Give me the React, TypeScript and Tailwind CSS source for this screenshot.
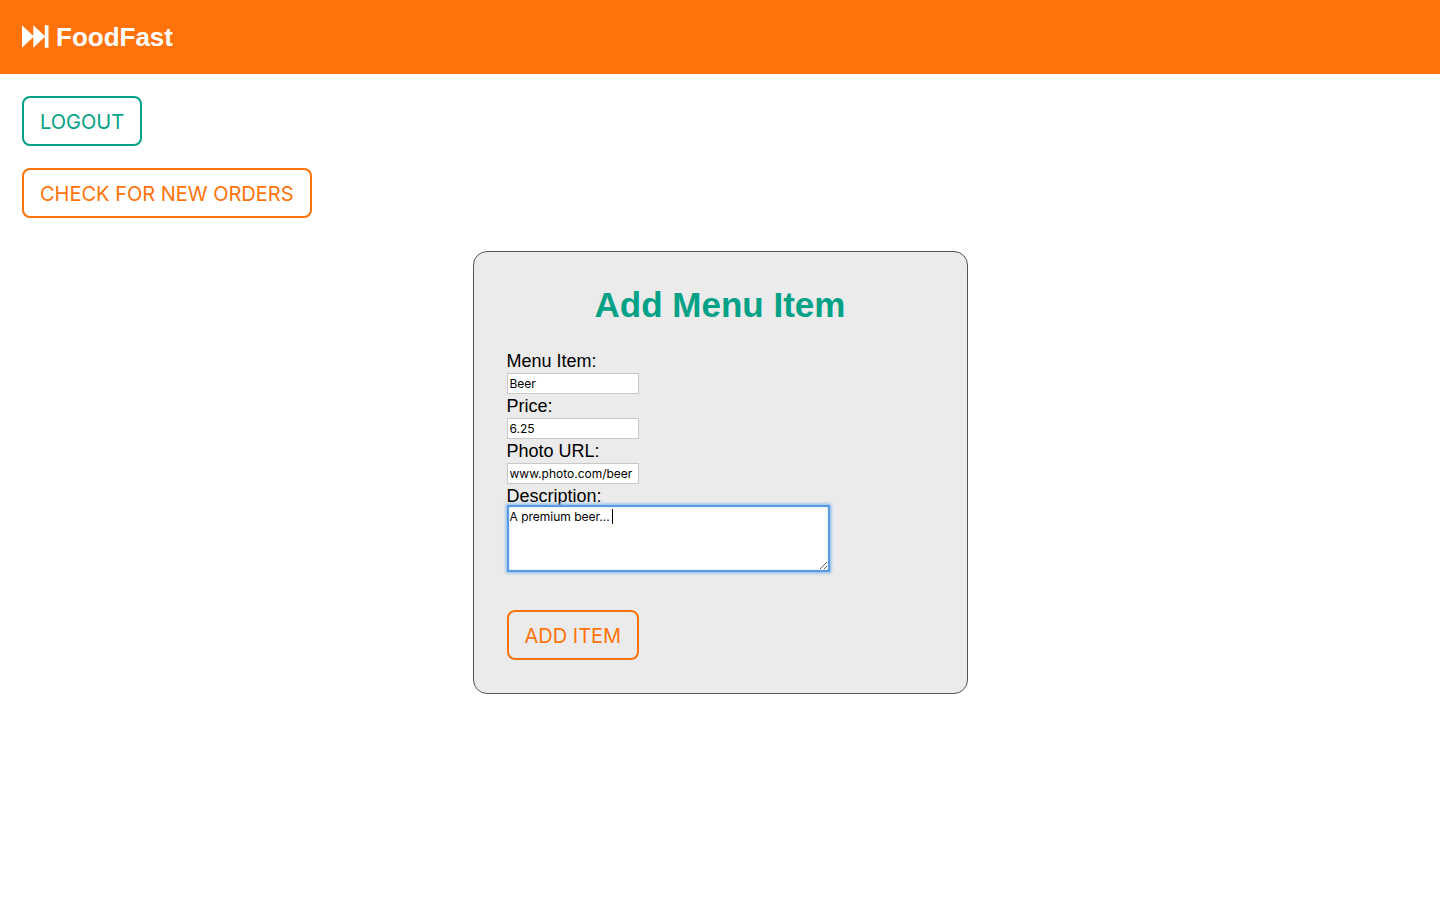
import type { ReactNode } from "react";

type FieldProps = { id: string; label: string; value: string };

function Field({ id, label, value }: FieldProps) {
  return (
    <div className="flex flex-col items-start">
      <label htmlFor={id} className="text-[18px] leading-6">
        {label}
      </label>
      <input
        id={id}
        type="text"
        defaultValue={value}
        className="h-[21px] w-[132px] border border-[#c8c8c8] bg-white px-0.5 font-['Inter',sans-serif] text-[12px] outline-none"
      />
    </div>
  );
}

type ButtonProps = { tone: "green" | "orange"; type?: "button" | "submit"; children: ReactNode };

const tones = {
  green: "border-[#03a185] text-[#03a185]",
  orange: "border-[#ff730a] text-[#ff730a]",
};

function OutlineButton({ tone, type = "button", children }: ButtonProps) {
  return (
    <button
      type={type}
      className={`h-[50px] cursor-pointer rounded-lg border-2 px-4 pt-0.5 font-['Inter',sans-serif] text-[20px] uppercase ${tones[tone]}`}
    >
      {children}
    </button>
  );
}

export default function App() {
  return (
    <div className="min-h-screen bg-white font-['Liberation_Sans',Arial,sans-serif] text-black">
      <header className="flex h-[74px] items-center bg-[#ff730a] px-[22px] text-white">
        <a href="#" className="flex items-center gap-[7px]">
          <svg width="27" height="24" viewBox="0 0 27 24" fill="currentColor" aria-hidden="true">
            <path d="M0 0.2L11.3 10.9V0.2L22.8 11V0.2H26.5V22.8H22.8V11.9L11.3 22.8V12L0 22.8Z" />
          </svg>
          <span className="text-[26px] font-bold leading-8">FoodFast</span>
        </a>
      </header>

      <main className="px-[22px] pt-[22px] pb-8">
        <div className="flex flex-col items-start gap-[22px]">
          <OutlineButton tone="green">Logout</OutlineButton>
          <OutlineButton tone="orange">Check for new orders</OutlineButton>
        </div>

        <form
          className="mx-auto mt-[33px] w-full max-w-[495px] rounded-[14px] border border-[#555555] bg-[#ebebeb] p-[33px]"
          onSubmit={(event) => event.preventDefault()}
        >
          <h1 className="text-center text-[35px] font-bold leading-10 text-[#03a185]">Add Menu Item</h1>

          <div className="mt-6">
            <Field id="name" label="Menu Item:" value="Beer" />
            <Field id="price" label="Price:" value="6.25" />
            <Field id="photo" label="Photo URL:" value="www.photo.com/beer" />
            <div className="flex flex-col items-start">
              <label htmlFor="description" className="text-[18px] leading-6">
                Description:
              </label>
              <div className="relative -mt-[3px] flex">
                <textarea
                  id="description"
                  defaultValue="A premium beer..."
                  className="h-[67px] w-[323px] resize border-2 border-[#5b9be2] bg-white px-px pt-0.5 font-['Inter',sans-serif] text-[12px] leading-4 caret-transparent shadow-[0_0_3px_1px_#7fb4ee,inset_0_0_2px_#a9d0f8] outline-none"
                />
                <span aria-hidden="true" className="absolute top-1 left-[105px] h-[15px] w-px bg-black" />
              </div>
            </div>
          </div>

          <div className="mt-[38px] flex">
            <OutlineButton tone="orange" type="submit">
              Add item
            </OutlineButton>
          </div>
        </form>
      </main>
    </div>
  );
}
